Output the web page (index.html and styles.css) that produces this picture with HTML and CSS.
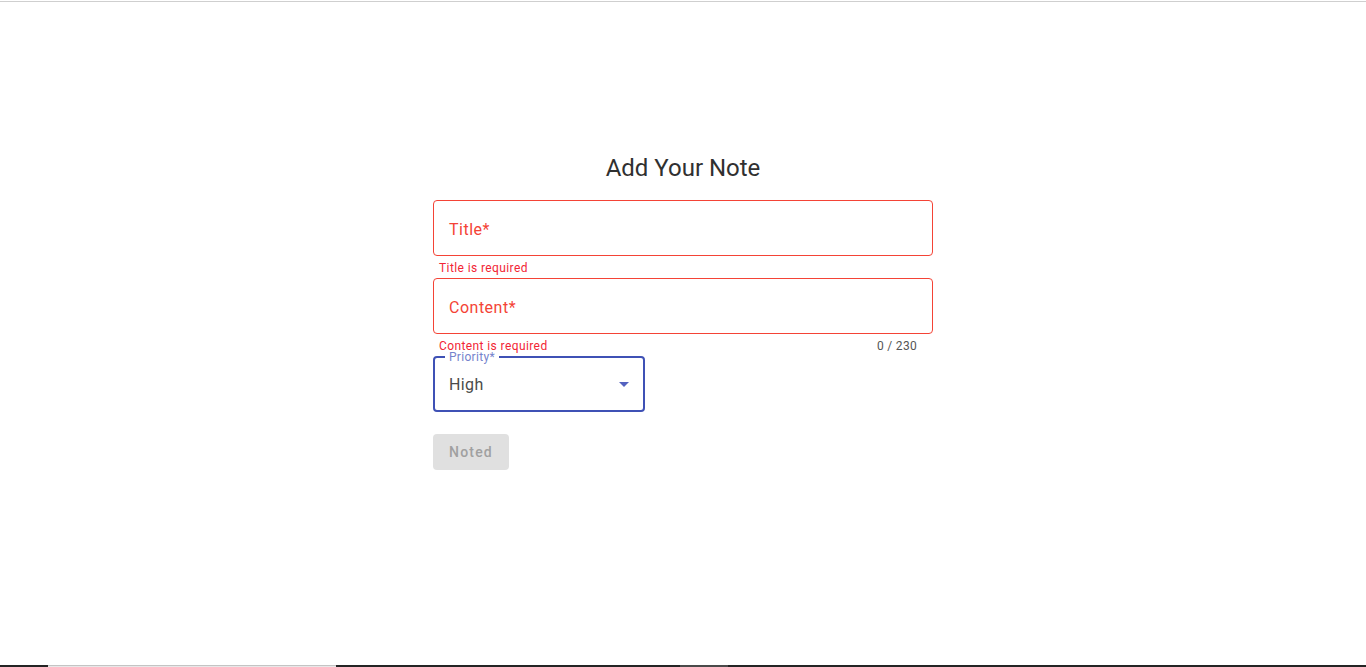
FILE: index.html
```html
<!DOCTYPE html>
<html lang="en">
<head>
<meta charset="utf-8">
<title>Add Your Note</title>
<link rel="stylesheet" href="styles.css">
</head>
<body>
<div class="topline"></div>
<main class="page">
  <form class="note-form">
    <h1 class="heading">Add Your Note</h1>
    <div class="field">
      <div class="box box-error"><span class="label-error">Title*</span></div>
      <div class="helper"><span class="helper-error">Title is required</span></div>
    </div>
    <div class="field">
      <div class="box box-error"><span class="label-error">Content*</span></div>
      <div class="helper"><span class="helper-error">Content is required</span><span class="counter">0 / 230</span></div>
    </div>
    <div class="select">
      <span class="notch">Priority*</span>
      <span class="select-value">High</span>
      <svg class="arrow" width="24" height="24" viewBox="0 0 24 24"><path d="M7 10l5 5 5-5z" fill="#5462c0"/></svg>
    </div>
    <button type="button" class="btn" disabled>Noted</button>
  </form>
</main>
<footer class="bottombar">
  <div class="seg-dark seg-a"></div>
  <div class="seg-light"></div>
  <div class="seg-dark seg-b"></div>
  <div class="seg-gray"></div>
  <div class="seg-dark seg-c"></div>
</footer>
</body>
</html>
```
FILE: styles.css
```css
html, body {
  margin: 0;
  padding: 0;
  background: #fff;
  font-family: Roboto, "Liberation Sans", Arial, sans-serif;
}
body {
  display: flex;
  flex-direction: column;
  height: 667px;
  overflow: hidden;
}
.topline {
  height: 1px;
  margin-top: 1px;
  background: #cfcfcf;
  flex: none;
}
.page {
  flex: 1;
  display: flex;
  justify-content: center;
}
.note-form {
  width: 500px;
  margin-top: 150px;
  display: flex;
  flex-direction: column;
}
.heading {
  margin: 0 0 16px;
  font-size: 24px;
  font-weight: 400;
  line-height: 32px;
  color: #303030;
  text-align: center;
}
.box {
  height: 56px;
  box-sizing: border-box;
  border-radius: 4px;
  display: flex;
  align-items: center;
  padding: 2px 15px 0;
}
.box-error {
  border: 1px solid #f44336;
}
.label-error {
  font-size: 16px;
  color: #f44336;
  letter-spacing: 0.5px;
}
.helper {
  height: 22px;
  box-sizing: border-box;
  padding: 6px 16px 0 6px;
  display: flex;
  justify-content: space-between;
  font-size: 12px;
  line-height: 12px;
  letter-spacing: 0.4px;
}
.helper-error {
  display: block;
  color: #f22535;
}
.counter {
  color: #555;
  letter-spacing: 0.3px;
}
.select {
  position: relative;
  width: 212px;
  height: 56px;
  box-sizing: border-box;
  border: 2px solid #3f51b5;
  border-radius: 4px;
  display: flex;
  align-items: center;
  padding: 0 14px;
  justify-content: space-between;
}
.notch {
  position: absolute;
  left: 10px;
  top: -5px;
  background: #fff;
  padding: 0 4px 0 4px;
  font-size: 12px;
  line-height: 8px;
  height: 8px;
  color: #7583cc;
  letter-spacing: 0.3px;
}
.select-value {
  font-size: 16px;
  color: #4a4a4a;
  letter-spacing: 0.4px;
}
.arrow {
  margin-right: -7px;
}
.btn {
  margin-top: 22px;
  align-self: flex-start;
  width: 76px;
  height: 36px;
  border: none;
  border-radius: 4px;
  background: #e0e0e0;
  color: #a0a0a0;
  font-family: Roboto, "Liberation Sans", Arial, sans-serif;
  font-size: 14px;
  font-weight: 500;
  letter-spacing: 1.2px;
  padding: 0;
}
.bottombar {
  flex: none;
  height: 2px;
  display: flex;
}
.seg-dark { background: #242424; }
.seg-a { width: 48px; }
.seg-light { width: 288px; border-top: 1px solid #c4c4c4; box-sizing: border-box; background: #e8e8e8; }
.seg-b { width: 344px; }
.seg-gray { width: 48px; background: #4a4a4a; }
.seg-c { flex: 1; }
```
